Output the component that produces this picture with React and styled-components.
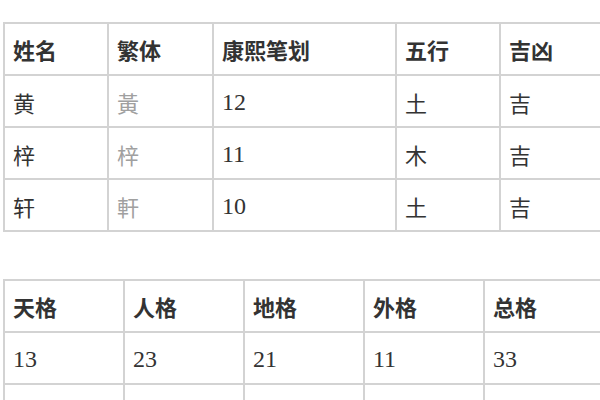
import React from 'react';
import styled, { createGlobalStyle } from 'styled-components';

const GlobalStyle = createGlobalStyle`
  html, body {
    margin: 0;
    padding: 0;
    background: #fff;
    overflow: hidden;
  }
  body {
    font-family: "Noto Sans CJK SC", "Noto Sans", sans-serif;
    color: #333;
  }
`;

const Page = styled.div`
  padding: 22px 0 0 3px;
  width: 700px;
`;

const Table = styled.table`
  border-collapse: collapse;
  table-layout: fixed;
  margin-bottom: ${(p) => p.$gap || 0}px;
`;

const Row = styled.tr`
  height: 52px;
`;

const HeadCell = styled.th`
  border: 2px solid #d3d3d3;
  padding: 0 8px;
  text-align: left;
  font-weight: 700;
  font-size: 22px;
  color: #333;
  vertical-align: middle;
`;

const Cell = styled.td`
  border: 2px solid #d3d3d3;
  padding: 2px 8px 0;
  font-size: ${(p) => (p.$num ? 24 : 22)}px;
  font-family: ${(p) =>
    p.$num
      ? '"Liberation Serif", "Noto Sans CJK SC", serif'
      : '"Noto Sans CJK SC", sans-serif'};
  color: ${(p) => (p.$muted ? '#a0a0a0' : '#333')};
  vertical-align: middle;
  white-space: nowrap;
`;

const nameCols = [104, 105, 183, 104, 110];
const nameHead = ['姓名', '繁体', '康熙笔划', '五行', '吉凶'];
const nameRows = [
  ['黄', '黃', '12', '土', '吉'],
  ['梓', '梓', '11', '木', '吉'],
  ['轩', '軒', '10', '土', '吉'],
];

const gridCols = [120, 120, 120, 120, 120];
const gridHead = ['天格', '人格', '地格', '外格', '总格'];
const gridRows = [
  ['13', '23', '21', '11', '33'],
  ['大吉', '大吉', '大吉', '大吉', '大吉'],
];

function DataTable({ cols, head, rows, gap, mutedCol }) {
  return (
    <Table $gap={gap} style={{ width: cols.reduce((a, b) => a + b, 0) }}>
      <colgroup>
        {cols.map((w, i) => (
          <col key={i} style={{ width: w }} />
        ))}
      </colgroup>
      <thead>
        <Row>
          {head.map((h) => (
            <HeadCell key={h}>{h}</HeadCell>
          ))}
        </Row>
      </thead>
      <tbody>
        {rows.map((r, ri) => (
          <Row key={ri}>
            {r.map((c, ci) => (
              <Cell key={ci} $num={/^\d+$/.test(c)} $muted={ci === mutedCol}>
                {c}
              </Cell>
            ))}
          </Row>
        ))}
      </tbody>
    </Table>
  );
}

export default function App() {
  return (
    <>
      <GlobalStyle />
      <Page>
        <DataTable cols={nameCols} head={nameHead} rows={nameRows} gap={47} mutedCol={1} />
        <DataTable cols={gridCols} head={gridHead} rows={gridRows} />
      </Page>
    </>
  );
}
